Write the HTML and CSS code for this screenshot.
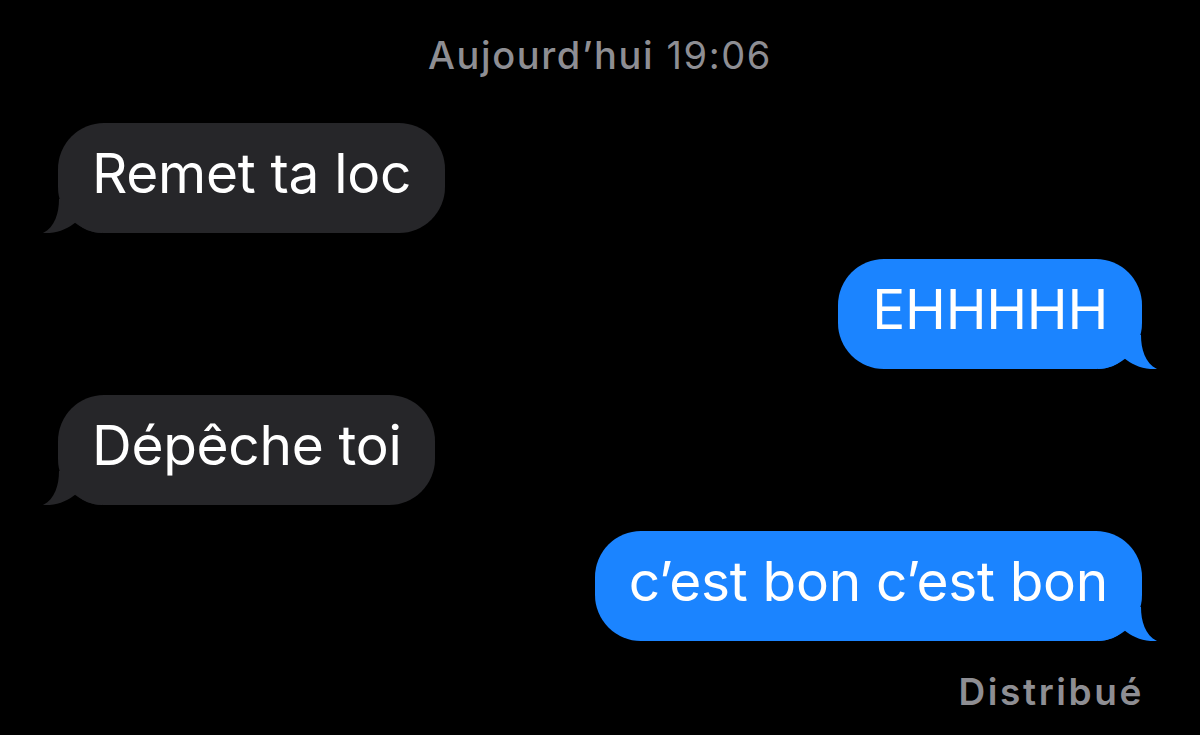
FILE: index.html
```html
<!DOCTYPE html>
<html lang="fr">
<head>
<meta charset="utf-8">
<title>Messages</title>
<link rel="stylesheet" href="styles.css">
</head>
<body>
<div class="thread">
  <div class="stamp"><span class="day">Aujourd’hui</span> 19:06</div>

  <div class="row them">
    <div class="bubble gray">Remet ta loc
      <svg class="tail" viewBox="0 0 60 34" width="60" height="34"><path d="M17 0 C17 14 13 28 1 34 C14 35 26 30 34 23 C40 30 50 34 60 34 L60 0 Z"/></svg>
    </div>
  </div>

  <div class="row me">
    <div class="bubble blue">EHHHHH
      <svg class="tail" viewBox="0 0 60 34" width="60" height="34"><path d="M17 0 C17 14 13 28 1 34 C14 35 26 30 34 23 C40 30 50 34 60 34 L60 0 Z"/></svg>
    </div>
  </div>

  <div class="row them">
    <div class="bubble gray">Dépêche toi
      <svg class="tail" viewBox="0 0 60 34" width="60" height="34"><path d="M17 0 C17 14 13 28 1 34 C14 35 26 30 34 23 C40 30 50 34 60 34 L60 0 Z"/></svg>
    </div>
  </div>

  <div class="row me">
    <div class="bubble blue">c’est bon c’est bon
      <svg class="tail" viewBox="0 0 60 34" width="60" height="34"><path d="M17 0 C17 14 13 28 1 34 C14 35 26 30 34 23 C40 30 50 34 60 34 L60 0 Z"/></svg>
    </div>
  </div>

  <div class="status">Distribué</div>
</div>
</body>
</html>
```

FILE: styles.css
```css
html, body {
  margin: 0;
  padding: 0;
  background: #000;
}

body {
  width: 1200px;
  height: 735px;
  overflow: hidden;
  font-family: Inter, "Liberation Sans", sans-serif;
}

.thread {
  display: flex;
  flex-direction: column;
  gap: 26px;
  padding: 33px 58px 0;
}

.stamp {
  text-align: center;
  color: #8e8e93;
  font-size: 38px;
  line-height: 44px;
  font-weight: 400;
  letter-spacing: 1.6px;
  margin-bottom: 20px;
}

.stamp .day {
  font-weight: 500;
}

.row {
  display: flex;
}

.row.them {
  justify-content: flex-start;
}

.row.me {
  justify-content: flex-end;
}

.bubble {
  position: relative;
  height: 110px;
  box-sizing: border-box;
  display: flex;
  align-items: center;
  padding: 0 34px 10px;
  border-radius: 46px;
  color: #fff;
  font-size: 55px;
  letter-spacing: -0.3px;
}

.bubble.gray {
  background: #262629;
}

.bubble.blue {
  background: #1b84ff;
}

.tail {
  position: absolute;
  bottom: 0;
}

.gray .tail {
  left: -16px;
  fill: #262629;
}

.blue .tail {
  right: -16px;
  fill: #1b84ff;
  transform: scaleX(-1);
}

.status {
  align-self: flex-end;
  color: #8e8e93;
  font-size: 37px;
  line-height: 44px;
  font-weight: 600;
  letter-spacing: 2.6px;
  margin-top: 3px;
  margin-right: -2px;
}
```
